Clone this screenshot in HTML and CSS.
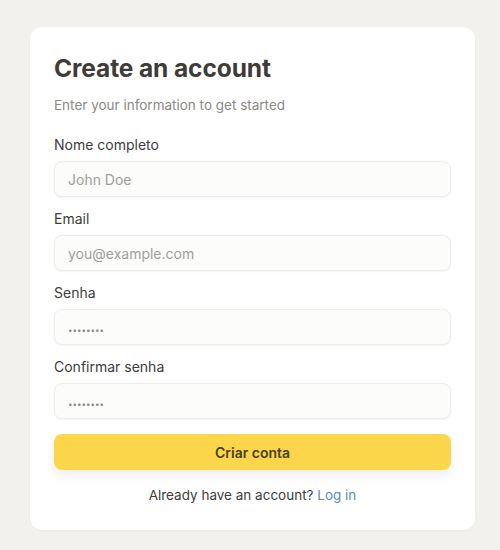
FILE: index.html
```html
<!DOCTYPE html>
<html lang="en">
<head>
<meta charset="utf-8">
<link rel="stylesheet" href="styles.css">
</head>
<body>
<main class="card">
  <h1 class="title">Create an account</h1>
  <p class="subtitle">Enter your information to get started</p>
  <form class="form">
    <div class="field">
      <label class="label">Nome completo</label>
      <input class="input" type="text" placeholder="John Doe">
    </div>
    <div class="field">
      <label class="label">Email</label>
      <input class="input" type="email" placeholder="you@example.com">
    </div>
    <div class="field">
      <label class="label">Senha</label>
      <input class="input input-secret" type="password" placeholder="••••••••">
    </div>
    <div class="field">
      <label class="label">Confirmar senha</label>
      <input class="input input-secret" type="password" placeholder="••••••••">
    </div>
    <button class="btn" type="button">Criar conta</button>
  </form>
  <p class="footer">Already have an account? <a class="link" href="#">Log in</a></p>
</main>
</body>
</html>
```
FILE: styles.css
```css
* { box-sizing: border-box; }
html, body { margin: 0; }
body {
  background: #f2f1ee;
  font-family: Inter, "Noto Sans", sans-serif;
  color: #3d3c38;
  padding: 27px 25px 20px 30px;
}
.card {
  width: 445px;
  background: #fff;
  border-radius: 12px;
  padding: 26px 24px 25px 24px;
  box-shadow: 0 1px 3px rgba(0,0,0,0.04);
}
.title {
  margin: 0;
  font-size: 24.5px;
  font-weight: 700;
  line-height: 30px;
  color: #3d3c38;
  letter-spacing: -0.1px;
}
.subtitle {
  margin: 12px 0 0;
  font-size: 13.5px;
  line-height: 20px;
  color: #8b8984;
}
.form {
  display: flex;
  flex-direction: column;
  gap: 12px;
  margin-top: 20px;
}
.field {
  display: flex;
  flex-direction: column;
  gap: 6px;
}
.label {
  font-size: 14px;
  line-height: 20px;
  color: #3d3c38;
}
.input {
  height: 36px;
  border: 1px solid #eeede9;
  border-radius: 8px;
  background: #fcfcfb;
  padding: 0 13px;
  font-family: inherit;
  font-size: 14px;
  color: #3d3c38;
  box-shadow: 0 1px 2px rgba(0,0,0,0.05);
}
.input::placeholder { color: #a09e99; }
.input-secret::placeholder {
  font-size: 8px;
  letter-spacing: 0;
  color: #8b8984;
}
.btn {
  height: 36px;
  border: none;
  border-radius: 8px;
  background: #fcd64a;
  color: #4a3f1c;
  font-family: inherit;
  font-size: 14px;
  font-weight: 600;
  box-shadow: 0 6px 12px rgba(0,0,0,0.07);
  margin-top: 3px;
}
.footer {
  margin: 15px 0 0;
  text-align: center;
  font-size: 13.5px;
  line-height: 20px;
  color: #3d3c38;
}
.link {
  color: #5a8fae;
  text-decoration: none;
}
```
